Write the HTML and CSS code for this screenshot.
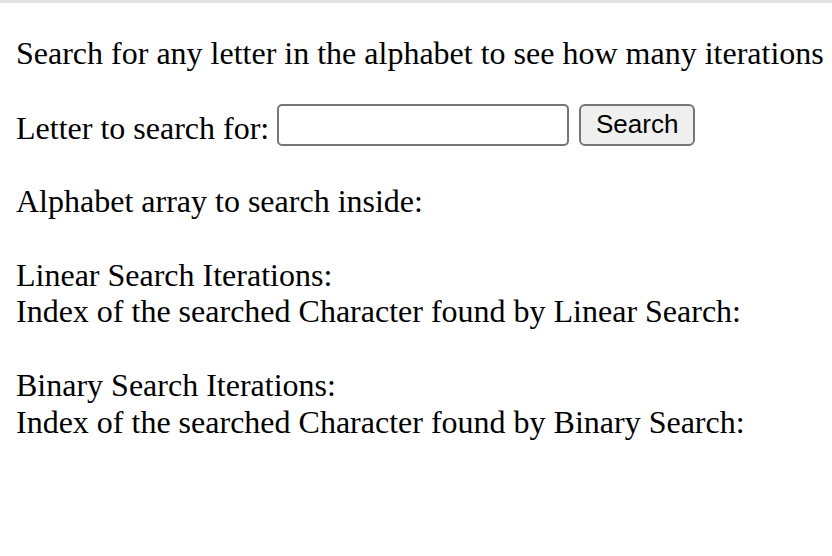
FILE: index.html
```html
<!DOCTYPE html>
<html>
<head>
<meta charset="utf-8">
<link rel="stylesheet" href="styles.css">
</head>
<body>
<div class="topbar"></div>
<main class="page">
  <p class="para">Search for any letter in the alphabet to see how many iterations</p>
  <p class="para form-line">Letter to search for: <input class="field" type="text"> <button class="btn">Search</button></p>
  <p class="para plain">Alphabet array to search inside: <span class="out"></span></p>
  <div class="result">Linear Search Iterations: <span class="out"></span><br>Index of the searched Character found by Linear Search: <span class="out"></span></div>
  <div class="result">Binary Search Iterations: <span class="out"></span><br>Index of the searched Character found by Binary Search: <span class="out"></span></div>
</main>
</body>
</html>
```
FILE: styles.css
```css
html, body {
  margin: 0;
  padding: 0;
  background: #fff;
}
body {
  font-family: "Liberation Serif", "Times New Roman", serif;
  font-size: 32px;
  line-height: 36.8px;
  color: #000;
  overflow: hidden;
}
.topbar {
  height: 3px;
  background: #e1e1e1;
}
.page {
  padding: 0 16px;
  margin-top: 32px;
}
.para {
  margin: 0 0 32px 0;
  white-space: nowrap;
}
.form-line {
  margin-bottom: 37px;
}
.plain {
  margin-bottom: 0;
}
.result {
  margin-top: 36.8px;
  white-space: nowrap;
}
.field {
  box-sizing: border-box;
  width: 292px;
  height: 42px;
  margin: 0;
  border: 2px solid #767676;
  border-radius: 5px;
  background: #fff;
  vertical-align: 5px;
  padding: 0 4px;
  font-family: "Liberation Sans", Arial, sans-serif;
  font-size: 26px;
}
.btn {
  box-sizing: border-box;
  width: 116px;
  height: 42px;
  margin: 0 0 0 2px;
  padding: 0;
  border: 2px solid #767676;
  border-radius: 6px;
  background: #efefef;
  color: #000;
  font-family: "Liberation Sans", Arial, sans-serif;
  font-size: 26px;
  vertical-align: 5px;
}
```
